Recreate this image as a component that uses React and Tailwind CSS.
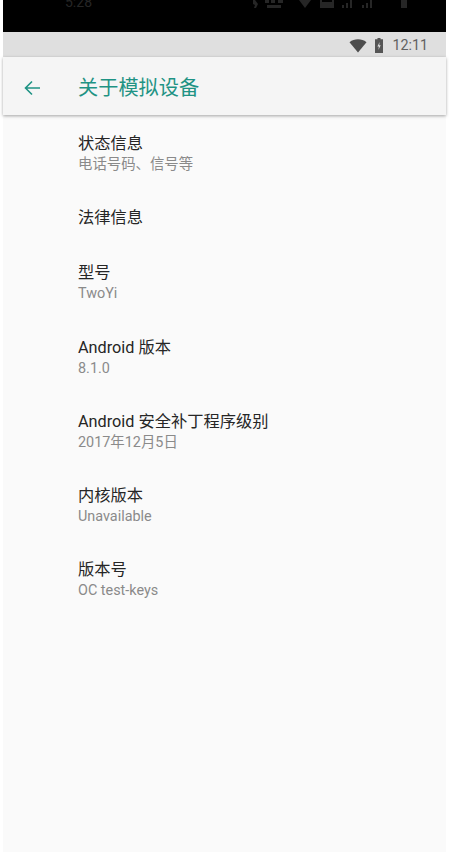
const cjk = { fontFamily: 'Roboto, "Noto Sans CJK SC", sans-serif' };

const items = [
  { title: "状态信息", sub: "电话号码、信号等" },
  { title: "法律信息" },
  { title: "型号", sub: "TwoYi" },
  { title: "Android 版本", sub: "8.1.0" },
  { title: "Android 安全补丁程序级别", sub: "2017年12月5日" },
  { title: "内核版本", sub: "Unavailable" },
  { title: "版本号", sub: "OC test-keys" },
];

function FaintIcons() {
  return (
    <svg width="156" height="8" viewBox="0 0 156 8" fill="#262626">
      <path d="M0 0h2l3 4-2 4H1l1-3-2-1z" />
      <path d="M12 0h4v3h-4zM18 0h4v3h-4zM25 0h5v3h-5zM14 5h14v3H14z" />
      <path d="M46 0h12l-6 8z" />
      <path d="M67 0h2v2h10V0h2v8H67zM70 4h8v2h-8z" />
      <path d="M89 5h2v3h-2zM93 3h2v5h-2zM97 0h2v8h-2zM109 5h2v3h-2zM113 3h2v5h-2zM117 0h2v8h-2z" />
      <path d="M148 0h6v8h-6z" />
    </svg>
  );
}

export default function App() {
  return (
    <div className="h-[852px] w-[449px] overflow-hidden bg-white px-[3px]" style={cjk}>
      <div className="flex h-full flex-col bg-[#fafafa]">
        <div className="flex h-[32px] shrink-0 items-start overflow-hidden bg-black pl-[62px] text-[14px] leading-[8px] text-[#262626]">
          <span className="mt-[-2px] w-[188px]">5:28</span>
          <FaintIcons />
        </div>
        <div className="flex h-[25px] shrink-0 items-center justify-end bg-[#dfdfdf] pt-[2px] pr-[18px] text-[14.3px] text-[#616161]">
          <svg width="18" height="14" viewBox="0 0 18 14">
            <path d="M0.5 3.2C3 1.2 5.8 0.3 9 0.3s6 .9 8.5 2.9L9 13.5z" fill="#4d4d4d" />
          </svg>
          <svg width="8" height="15" viewBox="0 0 8 15" className="ml-[8px]">
            <path d="M2.5 0h3v1.3H8V15H0V1.3h2.5z" fill="#555" />
            <path d="M4.6 4 2.4 8.6h1.5L3.4 12l2.3-4.7H4.2z" fill="#e0e0e0" />
          </svg>
          <span className="ml-[9px]">12:11</span>
        </div>
        <div className="flex h-[58px] shrink-0 items-center bg-[#f5f5f5] pt-[4px] shadow-[0_1px_3px_rgba(0,0,0,0.35)]">
          <svg width="16" height="16" viewBox="0 0 16 16" fill="none" stroke="#1f9384" strokeWidth="1.6" className="ml-[21px]">
            <path d="M16 8H1.5M8 1.5 1.5 8 8 14.5" />
          </svg>
          <h1 className="ml-[38px] text-[20.2px] text-[#1f9384]">关于模拟设备</h1>
        </div>
        <div className="flex flex-col pt-[1.5px] pl-[75px]">
          {items.map((it) => (
            <div key={it.title} className="flex flex-col py-[16.5px]">
              <div className="text-[16.25px] leading-[22px] text-[#262626]">{it.title}</div>
              {it.sub && <div className="text-[14.4px] leading-[19.25px] text-[#8a8a8a]">{it.sub}</div>}
            </div>
          ))}
        </div>
      </div>
    </div>
  );
}
